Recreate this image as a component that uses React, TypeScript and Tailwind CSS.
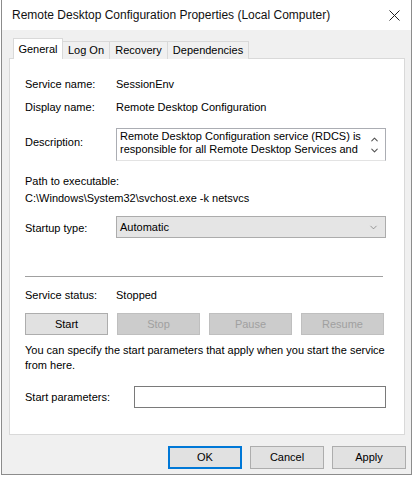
import { ChevronDown, ChevronUp } from "lucide-react";

const font = { fontFamily: '"Liberation Sans", Arial, sans-serif' };

const Btn = ({ label, disabled }: { label: string; disabled?: boolean }) => (
  <div
    className={
      disabled
        ? "h-[22px] w-[83px] border border-[#bfbfbf] bg-[#cccccc] text-[#a0a0a0] flex items-center justify-center"
        : "h-[22px] w-[83px] border border-[#adadad] bg-[#e1e1e1] text-black flex items-center justify-center"
    }
  >
    {label}
  </div>
);

const App = () => {
  const tabs = [
    { name: "Log On", w: "w-[47px]" },
    { name: "Recovery", w: "w-[58px]" },
    { name: "Dependencies", w: "w-[81px]" },
  ];

  return (
    <div
      className="ml-[1px] w-[411px] h-[475px] border-x border-b border-[#8c8c8c] bg-[#f0f0f0] text-[11px] text-black flex flex-col"
      style={font}
    >
      {/* Title bar */}
      <div className="h-[30px] bg-white flex items-center justify-between pl-[10px] pr-[11px] shrink-0">
        <span className="text-[12px] text-[#111]">
          Remote Desktop Configuration Properties (Local Computer)
        </span>
        <svg width="11" height="11" viewBox="0 0 11 11">
          <path d="M0.5 0.5 L10.5 10.5 M10.5 0.5 L0.5 10.5" stroke="#222" strokeWidth="1" />
        </svg>
      </div>

      {/* Tabs */}
      <div className="flex items-end pl-[11px] mt-[8px] h-[21px] relative z-10">
        <div className="h-[21px] w-[50px] border border-b-0 border-[#d9d9d9] bg-white flex items-center justify-center">
          General
        </div>
        {tabs.map((t) => (
          <div
            key={t.name}
            className={`${t.w} h-[18px] border border-l-0 border-b-0 border-[#d9d9d9] bg-[#f0f0f0] flex items-center justify-center`}
          >
            {t.name}
          </div>
        ))}
      </div>

      {/* Tab panel */}
      <div className="ml-[7px] w-[396px] h-[377px] -mt-[1px] border border-[#d9d9d9] bg-white px-[15px] flex flex-col">
        <div className="flex h-[16px] items-center mt-[17px]">
          <span className="w-[91px]">Service name:</span>
          <span>SessionEnv</span>
        </div>
        <div className="flex h-[16px] items-center mt-[7px]">
          <span className="w-[91px]">Display name:</span>
          <span>Remote Desktop Configuration</span>
        </div>
        <div className="flex mt-[13px]">
          <span className="w-[91px] mt-[6px]">Description:</span>
          <div className="w-[270px] h-[33px] border border-[#abadb3] border-b-[#e3e3e3] flex">
            <div className="flex-1 pl-[3px] pt-[1px] leading-[13px]">
              Remote Desktop Configuration service (RDCS) is responsible for all Remote Desktop Services and
            </div>
            <div className="w-[22px] flex flex-col items-center justify-center text-[#505050]">
              <ChevronUp size={11} strokeWidth={2.25} />
              <ChevronDown size={11} strokeWidth={2.25} />
            </div>
          </div>
        </div>
        <div className="h-[16px] flex items-center mt-[12px]">Path to executable:</div>
        <div className="h-[16px] flex items-center mt-[1px]">
          C:\Windows\System32\svchost.exe -k netsvcs
        </div>
        <div className="flex items-center mt-[10px]">
          <span className="w-[91px] mt-[2px]">Startup type:</span>
          <div className="w-[270px] h-[22px] border border-[#acacac] bg-[#e5e5e5] flex items-center justify-between pl-[3px] pr-[6px]">
            <span>Automatic</span>
            <ChevronDown size={11} strokeWidth={1.5} className="text-[#707070]" />
          </div>
        </div>
        <div className="mt-[38px] w-[358px] border-t border-[#a0a0a0]" />
        <div className="flex h-[16px] items-center mt-[10px]">
          <span className="w-[91px]">Service status:</span>
          <span>Stopped</span>
        </div>
        <div className="flex gap-[9px] mt-[10px]">
          <Btn label="Start" />
          <Btn label="Stop" disabled />
          <Btn label="Pause" disabled />
          <Btn label="Resume" disabled />
        </div>
        <p className="mt-[8px] leading-[15px]">
          You can specify the start parameters that apply when you start the service from here.
        </p>
        <div className="flex items-center mt-[13px]">
          <span className="w-[109px]">Start parameters:</span>
          <div className="w-[252px] h-[22px] border border-[#7a7a7a] bg-white" />
        </div>
      </div>

      {/* Dialog buttons */}
      <div className="flex justify-end gap-[8px] pr-[5px] mt-[11px]">
        <div className="w-[74px] h-[23px] border-2 border-[#0078d7] bg-[#e1e1e1] flex items-center justify-center">
          OK
        </div>
        <div className="w-[74px] h-[23px] border border-[#adadad] bg-[#e1e1e1] flex items-center justify-center">
          Cancel
        </div>
        <div className="w-[74px] h-[23px] border border-[#adadad] bg-[#e1e1e1] flex items-center justify-center">
          Apply
        </div>
      </div>
    </div>
  );
};

export default App;
